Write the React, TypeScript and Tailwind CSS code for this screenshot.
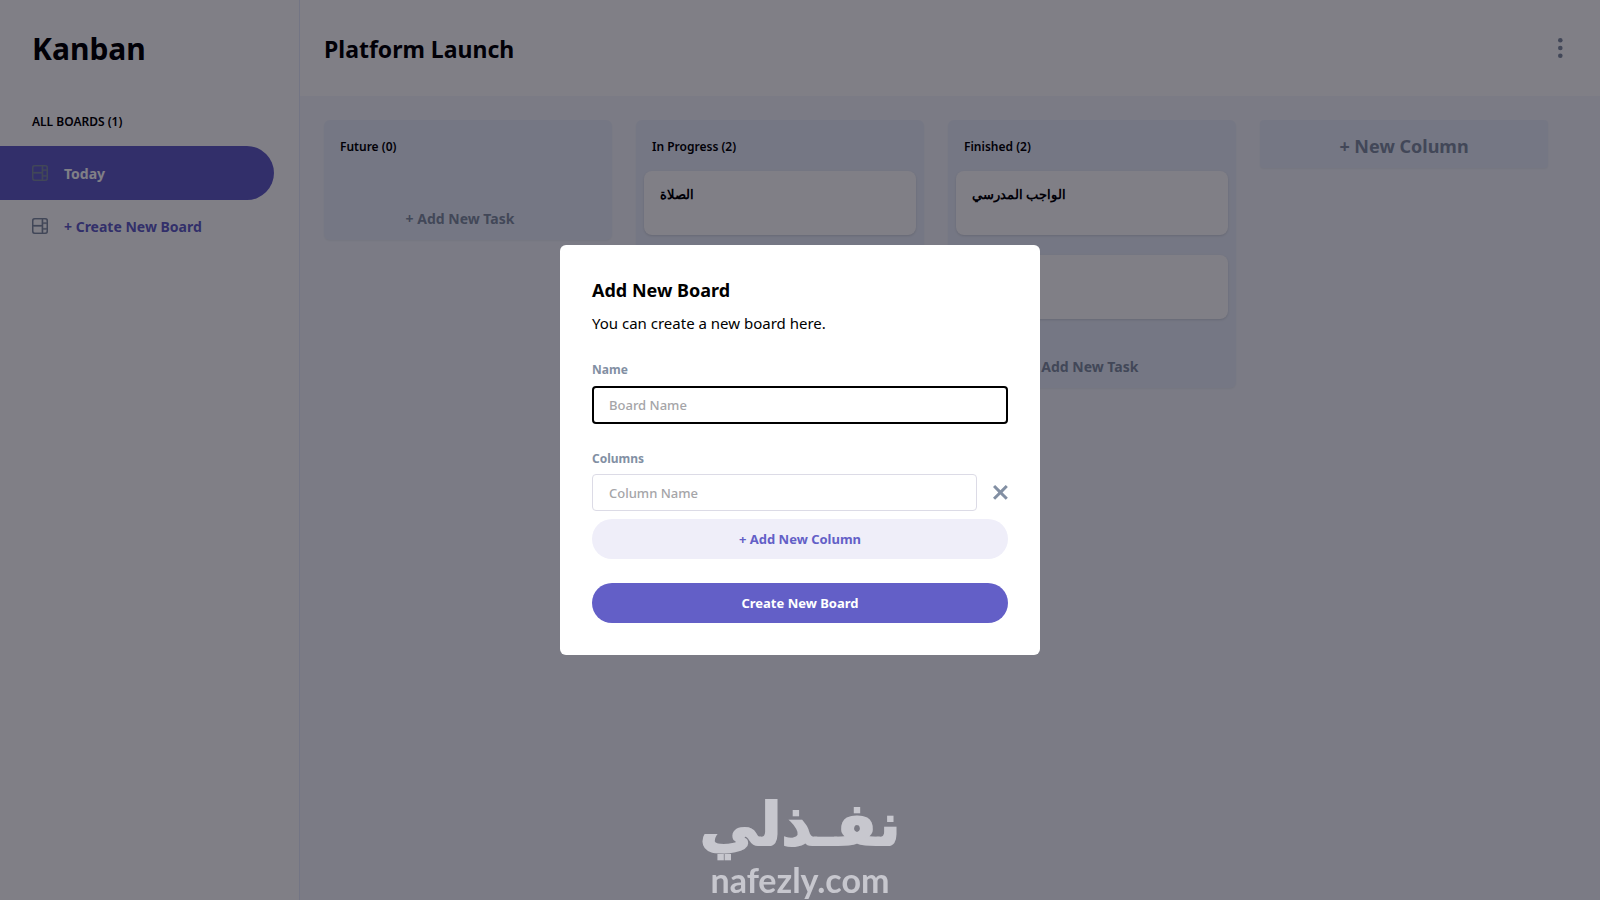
import { useState } from 'react'

const columns = [
  { name: 'Future', tasks: [] },
  { name: 'In Progress', tasks: ['الصلاة', ''] },
  { name: 'Finished', tasks: ['الواجب المدرسي', ''] },
]

const BoardIcon = () => (
  <svg width="16" height="16" viewBox="0 0 16 16" fill="#828FA3" stroke="#828FA3" strokeWidth="0.3" aria-hidden="true">
    <path d="M0 2.889A2.889 2.889 0 0 1 2.889 0H13.11A2.889 2.889 0 0 1 16 2.889V13.11A2.888 2.888 0 0 1 13.111 16H2.89A2.889 2.889 0 0 1 0 13.111V2.89Zm1.333 5.555v4.667c0 .859.697 1.556 1.556 1.556h6.889V8.444H1.333Zm8.445-1.333V1.333h-6.89A1.556 1.556 0 0 0 1.334 2.89V7.11h8.445Zm4.889-1.333H11.11v4.444h3.556V5.778Zm0 5.778H11.11v3.11h2a1.556 1.556 0 0 0 1.556-1.555v-1.555Zm0-7.112V2.89a1.555 1.555 0 0 0-1.556-1.556h-2v3.111h3.556Z" />
  </svg>
)

const Sidebar = () => (
  <aside className="w-[300px] shrink-0 bg-white border-r border-[#E4EBFA]">
    <h1 className="pl-8 pt-6 text-[30px] leading-[50px] font-bold">Kanban</h1>
    <h2 className="pl-8 mt-[38px] mb-[15px] text-[12px] leading-[19px] font-semibold">ALL BOARDS (1)</h2>
    <nav>
      <button className="flex items-center gap-4 w-[274px] h-[54px] pl-8 bg-[#635FC7] rounded-r-full text-[14px] font-bold text-white">
        <BoardIcon />
        Today
      </button>
      <button className="flex items-center gap-4 w-[274px] h-[52px] pl-8 text-[14px] font-bold text-[#635FC7]">
        <BoardIcon />
        + Create New Board
      </button>
    </nav>
  </aside>
)

const Column = ({ name, tasks }: { name: string; tasks: string[] }) => (
  <section className="w-72 shrink-0 rounded-md bg-[#E9EFFA] px-2 pt-4 pb-[11px] shadow-xs">
    <h3 className="pl-2 text-[12px] leading-[22px] font-semibold">{name} ({tasks.length})</h3>
    <div className="mt-[13px] flex flex-col gap-5">
      {tasks.map((task, i) => (
        <article key={i} className="h-16 rounded-lg bg-white px-4 py-3 shadow-sm">
          <h4 className="text-[13px] leading-[22px] font-semibold">{task}</h4>
        </article>
      ))}
    </div>
    <button className="mt-[38px] block w-64 text-[14px] leading-5 font-bold text-[#828FA3]">+ Add New Task</button>
  </section>
)

const AddBoard = () => {
  const [name, setName] = useState('')
  const [column, setColumn] = useState('')

  return (
    <div className="fixed inset-0 flex items-center justify-center bg-[#02000e]/50">
      <form role="dialog" aria-labelledby="dialog-title" className="w-[480px] rounded-md bg-white p-8" onSubmit={(e) => e.preventDefault()}>
        <h2 id="dialog-title" className="text-[18px] leading-[26px] font-bold">Add New Board</h2>
        <p className="mt-2 text-[15px] leading-6">You can create a new board here.</p>
        <label htmlFor="name" className="mt-[26px] mb-[7px] block text-[12px] leading-[18px] font-bold text-[#828FA3]">Name</label>
        <input id="name" value={name} onChange={(e) => setName(e.target.value)} placeholder="Board Name" className="block w-full h-[38px] rounded border-2 border-black px-[15px] text-[13px] font-medium placeholder:text-[#a5a5a8] outline-none" />
        <label htmlFor="column" className="mt-[26px] mb-[6px] block text-[12px] leading-[18px] font-bold text-[#828FA3]">Columns</label>
        <div className="flex items-center gap-4">
          <input id="column" value={column} onChange={(e) => setColumn(e.target.value)} placeholder="Column Name" className="grow h-[37px] rounded border border-[#dcdbe6] px-4 text-[13px] font-medium placeholder:text-[#a5a5a8] outline-none" />
          <button type="button" aria-label="Remove column">
            <svg width="15" height="15" viewBox="0 0 15 15" fill="#828FA3">
              <path d="m12.728 0 2.122 2.122L9.546 7.425l5.303 5.303-2.122 2.122-5.303-5.303-5.303 5.303L0 12.728l5.303-5.303L0 2.122 2.122 0l5.303 5.303L12.728 0Z" />
            </svg>
          </button>
        </div>
        <button type="button" className="mt-2 block w-full h-10 rounded-full bg-[#EFEEF9] pt-px text-[13px] font-bold text-[#635FC7]">+ Add New Column</button>
        <button type="submit" className="mt-6 block w-full h-10 rounded-full bg-[#635FC7] pt-px text-[13px] font-bold text-white">Create New Board</button>
      </form>
    </div>
  )
}

const Watermark = () => (
  <div className="fixed inset-x-0 bottom-0 flex flex-col items-center text-[#fafaff] opacity-60 pointer-events-none">
    <span lang="ar" className="font-['DejaVu_Sans',sans-serif] text-[59px] leading-[74px] font-bold [-webkit-text-stroke:2px_#fafaff]">نفـذلي</span>
    <span className="pb-0.5 font-['Lato',sans-serif] text-[34px] leading-9 font-bold">nafezly.com</span>
  </div>
)

const App = () => {
  return (
    <div className="min-h-screen flex bg-[#F4F7FD] font-['Noto_Sans',sans-serif] text-black">
      <Sidebar />
      <main className="grow min-w-0">
        <header className="h-24 flex items-center justify-between bg-white pl-6 pr-[37px]">
          <h2 className="pt-0.5 text-[23px] font-bold">Platform Launch</h2>
          <button aria-label="Board menu">
            <svg width="5" height="20" viewBox="0 0 5 20" fill="#828FA3">
              <circle cx="2.308" cy="2.308" r="2.308" />
              <circle cx="2.308" cy="10" r="2.308" />
              <circle cx="2.308" cy="17.692" r="2.308" />
            </svg>
          </button>
        </header>
        <div className="flex items-start gap-6 p-6">
          {columns.map((column) => (
            <Column key={column.name} name={column.name} tasks={column.tasks} />
          ))}
          <button className="w-72 h-12 shrink-0 rounded-sm bg-[#E9EFFA] pt-1 text-[18px] font-bold text-[#828FA3] shadow-xs">+ New Column</button>
        </div>
      </main>
      <AddBoard />
      <Watermark />
    </div>
  )
}

export default App
